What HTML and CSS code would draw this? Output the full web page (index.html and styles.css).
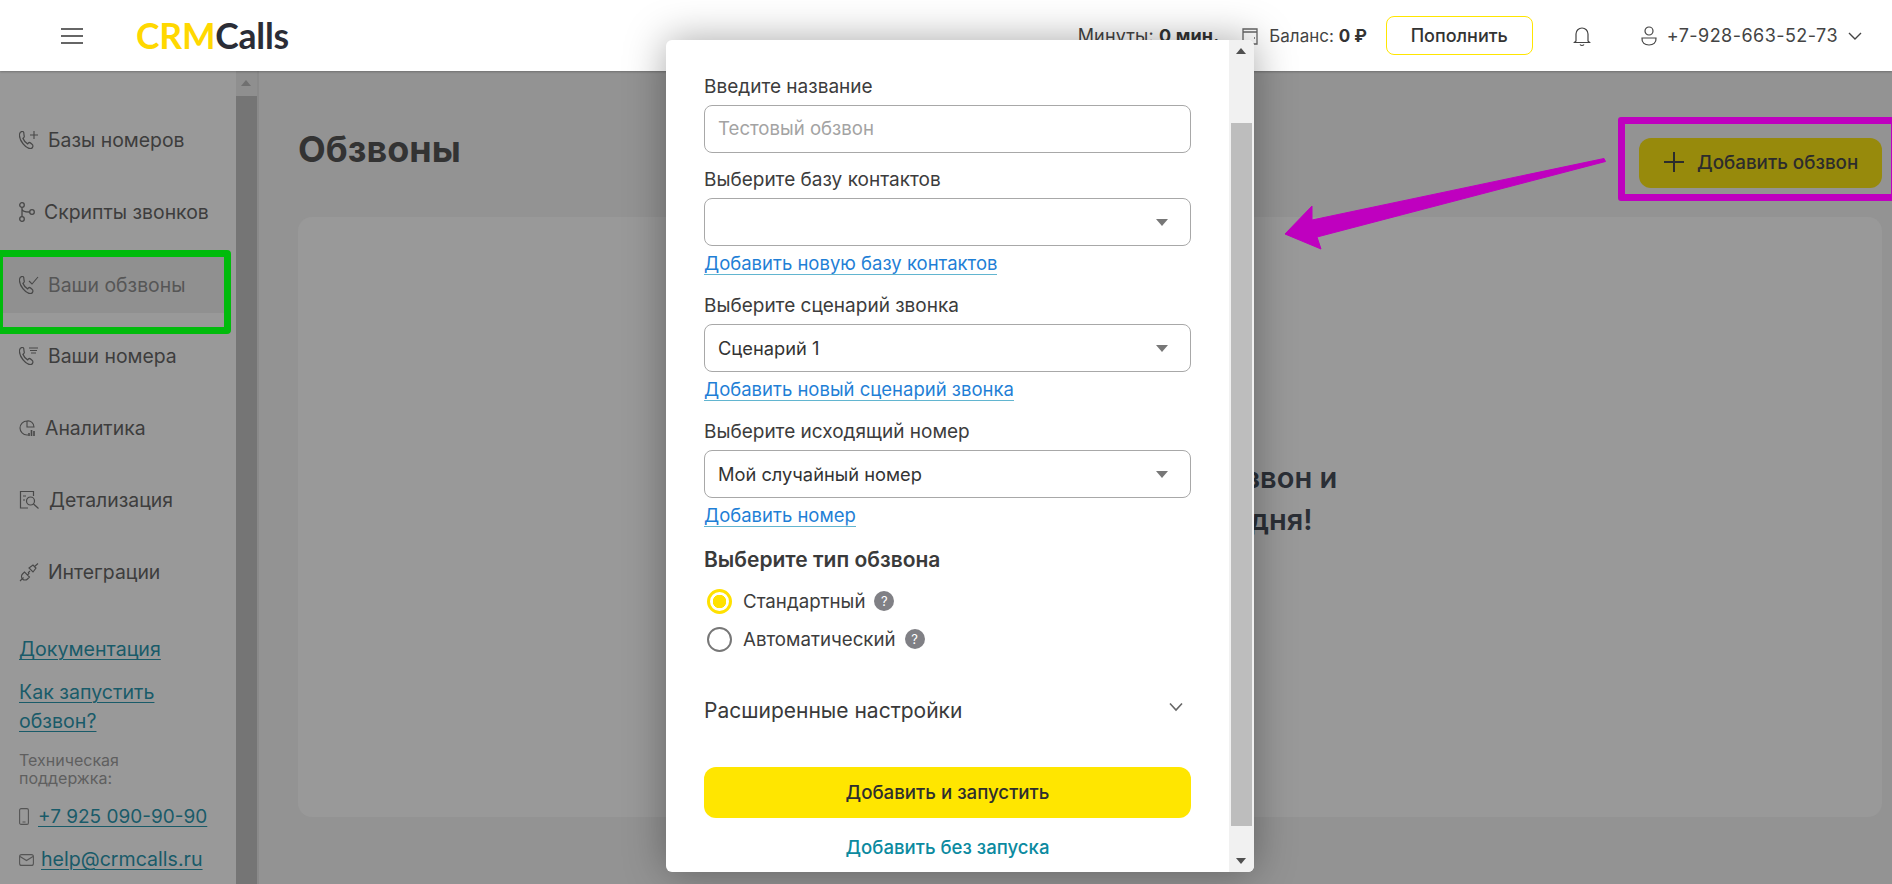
FILE: index.html
```html
<!DOCTYPE html>
<html lang="ru">
<head>
<meta charset="utf-8">
<title>CRMCalls</title>
<link rel="stylesheet" href="styles.css">
</head>
<body>
<svg class="defs" width="0" height="0" aria-hidden="true">
  <symbol id="handset" viewBox="2 2 19 20" preserveAspectRatio="none"><path d="M6 2.500c-1.600.3-3.200 1.600-3.400 3.400-.3 3 1.500 7 4.500 10.300 3 3.200 6.200 5.300 9.200 5.300 1.500 0 3-1 3.300-2.500.2-1-.3-1.700-1.100-2.300l-2.100-1.500c-.9-.6-1.800-.5-2.500.2l-1 1c-2.400-1.200-4.700-3.700-5.900-6.200l1.100-1c.7-.7.8-1.600.3-2.400L8 3.700C7.500 2.800 6.900 2.300 6 2.500z" fill="none" stroke="currentColor" stroke-width="1.500"/></symbol>
</svg>

<header class="topbar">
  <div class="burger"><i></i><i></i><i></i></div>
  <div class="logo"><span class="logo-y">CRM</span>Calls</div>
  <div class="top-right">
    <span class="stat">Минуты: <b>0 мин.</b></span>
    <svg class="ic-wallet" width="18" height="20" viewBox="0 0 18 20"><path d="M2 3h14v15H2zM2 6h14M13 12h1" fill="none" stroke="#666" stroke-width="1.300"/></svg>
    <span class="stat bal">Баланс: <b>0 ₽</b></span>
    <button class="refill">Пополнить</button>
    <svg class="ic-bell" width="20" height="22" viewBox="0 0 20 22"><path d="M4 16V9a6 6 0 0 1 12 0v7l1.500 1.500h-15zM8 19.500c1 1.300 3 1.300 4 0" fill="none" stroke="#444" stroke-width="1.200"/></svg>
    <svg class="ic-user" width="18" height="22" viewBox="0 0 18 22"><circle cx="9" cy="6" r="4" fill="none" stroke="#444" stroke-width="1.200"/><path d="M2 13h14c.5 5-3 7-7 7s-7.500-2-7-7z" fill="none" stroke="#444" stroke-width="1.200"/></svg>
    <span class="account">+7-928-663-52-73</span>
    <svg class="ic-chev" width="16" height="10" viewBox="0 0 16 10"><path d="M2 2l6 6 6-6" fill="none" stroke="#444" stroke-width="1.400"/></svg>
  </div>
</header>

<div class="body-row">
  <aside class="sidebar">
    <nav class="nav">
      <a class="nav-item"><svg class="nav-ic" width="20" height="20" viewBox="0 0 20 20"><use href="#handset" width="15" height="18" y="1"/><path d="M15 1v8M11 5h8" stroke="currentColor" fill="none" stroke-width="1.100"/></svg><span class="t29">Базы номеров</span></a>
      <a class="nav-item"><svg class="nav-ic ic-s" width="17" height="20" viewBox="0 0 17 20" fill="none" stroke="currentColor" stroke-width="1.300"><circle cx="3" cy="3" r="2.300"/><circle cx="3" cy="17" r="2.300"/><circle cx="13" cy="10" r="2.300"/><path d="M3 5.500v9M3 7c0 2 2 3 7.500 3"/></svg><span class="t26">Скрипты звонков</span></a>
      <a class="nav-item active"><svg class="nav-ic" width="20" height="20" viewBox="0 0 20 20"><use href="#handset" width="15" height="18" y="1"/><path d="M10 6l3 3 6-7" stroke="currentColor" fill="none" stroke-width="1.100"/></svg><span class="t29">Ваши обзвоны</span></a>
      <a class="nav-item"><svg class="nav-ic" width="20" height="20" viewBox="0 0 20 20"><use href="#handset" width="15" height="18" y="1"/><path d="M10 2h9M11 4.500h7M12 7h5" stroke="currentColor" fill="none" stroke-width="1.100"/></svg><span class="t29">Ваши номера</span></a>
      <a class="nav-item"><svg class="nav-ic" width="17" height="20" viewBox="0 0 17 20" fill="none" stroke="currentColor" stroke-width="1.100"><path d="M8 3a7 7 0 1 0 0 14h1M8 3v6h7a6 6 0 0 0-7-6z"/><path d="M10 18v-3M12.500 18v-6M15 18v-5" stroke-width="1.600"/></svg><span class="t27">Аналитика</span></a>
      <a class="nav-item"><svg class="nav-ic" width="20" height="20" viewBox="0 0 20 20" fill="none" stroke="currentColor" stroke-width="1.200"><path d="M9 18H1.500V1.500h13V6"/><path d="M4 6h3M4 10h2"/><circle cx="11.500" cy="11" r="4"/><path d="M14.500 14l5 4.500"/></svg><span class="t31">Детализация</span></a>
      <a class="nav-item"><svg class="nav-ic" width="20" height="20" viewBox="0 0 20 20" fill="none" stroke="currentColor" stroke-width="1.100"><path d="M1 19l3.500-3.500M15 5l4-3.500"/><path d="M3.500 12a3.500 3.500 0 0 0 5 5l2-2-5-5zM11 9l-2 2M8.500 13l1.800-1.800"/><path d="M10 6l4-3 3 3-3 4z"/></svg><span class="t29">Интеграции</span></a>
    </nav>
    <div class="side-links">
      <a class="doc">Документация</a>
      <a class="doc two">Как запустить<br>обзвон?</a>
      <p class="support">Техническая<br>поддержка:</p>
      <div class="contact"><svg width="10" height="17" viewBox="0 0 10 17"><rect x=".6" y=".6" width="8.800" height="15.800" rx="1.500" fill="none" stroke="#555" stroke-width="1.100"/><path d="M3.500 14h3" stroke="#555"/></svg><a class="doc ph">+7 925 090-90-90</a></div>
      <div class="contact"><svg width="15" height="12" viewBox="0 0 15 12"><rect x=".6" y=".6" width="13.800" height="10.800" rx="2" fill="none" stroke="#555" stroke-width="1.100"/><path d="M1 2.500l6.500 4 6.500-4" fill="none" stroke="#555" stroke-width="1.100"/></svg><a class="doc em">help@crmcalls.ru</a></div>
    </div>
  </aside>
  <div class="side-scroll"><span class="up"></span><span class="thumb"></span></div>
  <main class="main">
    <div class="main-head">
      <h1>Обзвоны</h1>
      <button class="add"><span class="plus"></span>Добавить обзвон</button>
    </div>
    <section class="card">
      <p class="empty">Создайте самый первый обзвон и<br>привлеките клиентов сегодня!</p>
    </section>
  </main>
</div>

<div class="modal">
  <form class="form">
    <label class="lbl">Введите название</label>
    <div class="box ph-text field-first">Тестовый обзвон</div>
    <label class="lbl">Выберите базу контактов</label>
    <div class="box"><span></span><i class="caret"></i></div>
    <a class="add-link">Добавить новую базу контактов</a>
    <label class="lbl">Выберите сценарий звонка</label>
    <div class="box"><span>Сценарий 1</span><i class="caret"></i></div>
    <a class="add-link">Добавить новый сценарий звонка</a>
    <label class="lbl">Выберите исходящий номер</label>
    <div class="box"><span>Мой случайный номер</span><i class="caret"></i></div>
    <a class="add-link">Добавить номер</a>
    <div class="type-title">Выберите тип обзвона</div>
    <div class="radio-row"><i class="radio on"></i><span>Стандартный</span><i class="help">?</i></div>
    <div class="radio-row"><i class="radio"></i><span>Автоматический</span><i class="help">?</i></div>
    <div class="advanced"><span>Расширенные настройки</span><svg class="adv-chev" width="16" height="10" viewBox="0 0 16 10"><path d="M2 1.500l6 6.500 6-6.500" fill="none" stroke="#666" stroke-width="1.600"/></svg></div>
    <div class="primary">Добавить и запустить</div>
    <a class="secondary">Добавить без запуска</a>
  </form>
  <div class="modal-scroll"><span class="arr-up"></span><span class="m-thumb"></span><span class="arr-down"></span></div>
</div>

<div class="mark-green"></div>
<div class="mark-purple"></div>
<svg class="arrow" width="340" height="110" viewBox="0 0 340 110"><path d="M324 8.500l1.500 3L37 87l4 12L5 84l27-28v14z" fill="#bf00bf" stroke="#bf00bf" stroke-linejoin="round"/></svg>
</body>
</html>
```

FILE: styles.css
```css
* { box-sizing: border-box; }
html, body { margin: 0; height: 884px; overflow: hidden; }
body { font-family: Inter, "Noto Sans", sans-serif; color: #333; background: #939393; position: relative; }
.defs { position: absolute; }
i { font-style: normal; }

.topbar { height: 71px; background: #fff; display: flex; align-items: center; padding-left: 61px; box-shadow: 0 1px 2px rgba(0,0,0,.25); position: relative; z-index: 1; }
.burger { width: 22px; display: flex; flex-direction: column; gap: 5px; margin-right: 53px; }
.burger i { display: block; height: 2px; background: #666; }
.logo { font-family: Lato, sans-serif; font-weight: 700; font-size: 35.500px; color: #2b2d36; letter-spacing: -.2px; }
.logo-y { color: #ffd800; }
.top-right { margin-left: auto; display: flex; align-items: center; font-size: 18px; color: #444; padding-right: 29px; }
.stat { letter-spacing: .15px; }
.stat.bal { font-size: 17px; letter-spacing: 0; }
.stat b { font-weight: 700; color: #333; }
.ic-wallet { margin: 0 10px 0 22px; }
.refill { width: 147px; height: 39px; margin-left: 19px; background: #fff; border: 1px solid #ffe600; border-radius: 8px; font: 500 18px Inter, sans-serif; color: #333; padding: 0; }
.ic-bell { margin-left: 39px; }
.ic-user { margin-left: 48px; }
.account { margin-left: 9px; letter-spacing: .45px; }
.ic-chev { margin-left: 9px; }

.body-row { display: flex; height: 813px; }
.sidebar { width: 236px; background: #999; padding-top: 41px; flex: none; }
.nav { display: flex; flex-direction: column; gap: 16px; }
.nav-item { height: 56px; display: flex; align-items: center; padding-left: 19px; font-size: 19.400px; color: #3d3d3d; width: 225px; }
.nav-item.active { background: #909090; color: #565656; transform: translateY(1px); }
.nav-ic { flex: none; color: #484848; }
.t29 { margin-left: 9px; }
.t26 { margin-left: 8px; }
.t27 { margin-left: 9px; }
.t31 { margin-left: 10px; }
.side-links { padding: 35px 0 0 19px; }
.doc { display: block; font-size: 19.600px; line-height: 29px; color: #195b69; text-decoration: underline; text-decoration-thickness: 1px; text-underline-offset: 3px; }
.doc.two { margin-top: 14px; }
.support { margin: 15px 0 0; font-size: 16px; line-height: 18px; color: #5f5f5f; }
.contact { display: flex; align-items: center; height: 29px; margin-top: 14px; }
.support + .contact { margin-top: 15px; }
.ph { margin-left: 9px; font-size: 19px; }
.em { margin-left: 7px; }

.side-scroll { width: 21px; background: #8f8f8f; position: relative; flex: none; padding-top: 25px; }
.side-scroll .up { position: absolute; top: 9px; left: 5px; border: 5px solid transparent; border-top: 0; border-bottom: 6px solid #707070; width: 0; }
.side-scroll .thumb { display: block; height: 100%; width: 21px; background: #757575; }

.main { flex: 1; border-left: 2px solid #8a8a8a; padding-right: 10px; padding-left: 39px; }
.main-head { display: flex; justify-content: space-between; height: 146px; padding-top: 67px; }
h1 { margin: -11px 0 0; font-size: 36px; line-height: 44px; font-weight: 700; color: #333; }
.add { width: 243px; height: 50px; background: #978a0c; border: 0; border-radius: 12px; display: flex; align-items: center; padding: 0 0 2px 25px; font: 500 18.800px Inter, sans-serif; color: #2c2c2c; }
.plus { width: 20px; height: 20px; margin-right: 13px; background: linear-gradient(#2c2c2c,#2c2c2c) center/100% 2px no-repeat, linear-gradient(#2c2c2c,#2c2c2c) center/2px 100% no-repeat; }
.card { height: 600px; background: #999; border-radius: 14px; display: flex; justify-content: center; padding-top: 240px; }
.empty { margin: 0; text-align: center; font-size: 29px; line-height: 42px; font-weight: 600; color: #2b2f36; white-space: nowrap; }

.modal { position: absolute; left: 666px; top: 40px; width: 588px; height: 832px; background: #fff; border-radius: 6px; display: flex; box-shadow: 0 0 40px rgba(0,0,0,.35); z-index: 3; overflow: hidden; }
.form { width: 563px; padding: 35px 38px 0 38px; flex: none; }
.lbl { display: block; font-size: 19px; line-height: 24px; font-weight: 400; color: #3c3c3c; margin-bottom: 6px; }
.box { height: 48px; border: 1px solid #a8a8a8; border-radius: 8px; display: flex; align-items: center; justify-content: space-between; padding: 0 22px 0 13px; font-size: 18.300px; color: #333; }
.ph-text { color: #a3a3a3; font-size: 18.600px; padding-bottom: 2px; }
.field-first { margin-bottom: 15px; }
.caret { width: 0; border: 6px solid transparent; border-top: 7px solid #777; border-bottom: 0; }
.add-link { display: table; margin-top: 6px; margin-bottom: 19px; font-size: 18.500px; line-height: 22px; color: #1f7fd6; border-bottom: 1px solid #62b5d0; }
.type-title { font-size: 21px; font-weight: 600; line-height: 24px; color: #3a3a3a; margin-top: 21px; margin-bottom: 15px; }
.radio-row { display: flex; align-items: center; height: 28px; margin-bottom: 10px; font-size: 18.700px; color: #3d3d3d; padding-left: 3px; }
.radio { width: 25px; height: 25px; border: 2px solid #777; border-radius: 50%; margin-right: 11px; flex: none; }
.radio.on { border: 3px solid #ffe100; background: radial-gradient(circle, #ffe100 0 6.500px, #fff 7px); }
.help { width: 20px; height: 20px; border-radius: 50%; background: #808085; color: #fff; font-size: 13px; line-height: 20px; text-align: center; margin-left: 9px; }
.advanced { display: flex; align-items: center; justify-content: space-between; height: 28px; margin-top: 43px; padding-right: 7px; font-size: 21px; color: #3a3a3a; }
.adv-chev { margin-top: -6px; }
.primary { height: 51px; margin-top: 43px; background: #ffe600; border-radius: 12px; display: flex; align-items: center; justify-content: center; font-size: 18.700px; font-weight: 500; color: #2e2e2e; }
.secondary { display: block; margin-top: 17px; text-align: center; font-size: 18.600px; line-height: 24px; font-weight: 500; color: #0b8aa0; }
.modal-scroll { flex: 1; background: #f1f1f1; position: relative; }
.arr-up, .arr-down { position: absolute; left: 7px; width: 0; border: 5.500px solid transparent; }
.arr-up { top: 8px; border-top: 0; border-bottom: 6px solid #505050; }
.arr-down { bottom: 8px; border-bottom: 0; border-top: 6px solid #505050; }
.m-thumb { position: absolute; left: 2px; width: 21px; top: 83px; height: 703px; background: #bdbdbd; }

.mark-green { position: absolute; left: -4px; top: 250px; width: 235px; height: 84px; border: 7px solid #00bb0c; border-radius: 4px; z-index: 2; }
.mark-purple { position: absolute; left: 1618px; top: 117px; width: 280px; height: 84px; border: 7px solid #bf00bf; border-radius: 3px; z-index: 2; }
.arrow { position: absolute; left: 1280px; top: 150px; z-index: 2; }
```
